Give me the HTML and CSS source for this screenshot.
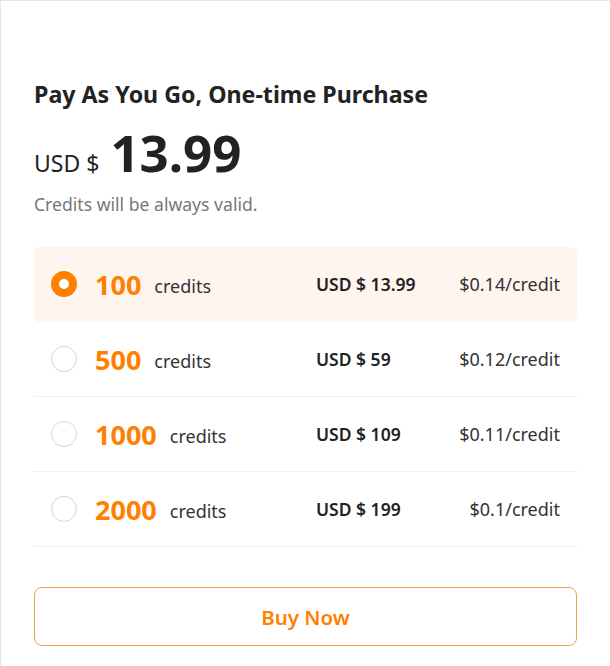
FILE: index.html
```html
<!DOCTYPE html>
<html>
<head>
<meta charset="utf-8">
<link rel="stylesheet" href="styles.css">
</head>
<body>
<div class="card">
  <h2 class="title">Pay As You Go, One-time Purchase</h2>
  <div class="price">
    <span class="cur">USD $</span>
    <span class="amount">13.99</span>
  </div>
  <p class="note">Credits will be always valid.</p>
  <div class="options">
    <div class="opt selected">
      <div class="left"><span class="radio"></span><span class="num">100</span><span class="unit">credits</span></div>
      <div class="usd">USD $ 13.99</div>
      <div class="per">$0.14/credit</div>
    </div>
    <div class="opt">
      <div class="left"><span class="radio"></span><span class="num">500</span><span class="unit">credits</span></div>
      <div class="usd">USD $ 59</div>
      <div class="per">$0.12/credit</div>
    </div>
    <div class="opt">
      <div class="left"><span class="radio"></span><span class="num">1000</span><span class="unit">credits</span></div>
      <div class="usd">USD $ 109</div>
      <div class="per">$0.11/credit</div>
    </div>
    <div class="opt">
      <div class="left"><span class="radio"></span><span class="num">2000</span><span class="unit">credits</span></div>
      <div class="usd">USD $ 199</div>
      <div class="per">$0.1/credit</div>
    </div>
  </div>
  <button class="buy">Buy Now</button>
</div>
</body>
</html>
```
FILE: styles.css
```css
html, body {
  margin: 0;
  padding: 0;
  background: #fff;
}
body {
  font-family: "Noto Sans", "Open Sans", sans-serif;
  color: #222;
}
.card {
  border-top: 1px solid #e6e6e6;
  border-left: 1px solid #e6e6e6;
  padding: 77px 33px 20px 33px;
  min-height: 666px;
  box-sizing: border-box;
}
.title {
  margin: 0;
  font-size: 23.2px;
  font-weight: 700;
  line-height: 32px;
  color: #222;
}
.price {
  display: flex;
  align-items: baseline;
  gap: 11px;
  margin-top: 13px;
  height: 58px;
}
.cur {
  font-size: 23px;
  color: #222;
}
.amount {
  font-size: 51px;
  font-weight: 700;
  line-height: 58px;
  color: #222;
}
.note {
  margin: 11px 0 0 0;
  font-size: 17.6px;
  line-height: 24px;
  color: #777;
}
.options {
  margin-top: 31px;
}
.opt {
  display: grid;
  grid-template-columns: 265px 1fr auto;
  align-items: center;
  height: 74px;
  padding: 0 17px;
  border-bottom: 1px solid #efefef;
}
.opt.selected {
  background: #fff5ef;
  border-bottom-color: transparent;
  border-radius: 6px;
}
.left {
  display: flex;
  align-items: center;
}
.radio {
  width: 26px;
  height: 26px;
  box-sizing: border-box;
  border-radius: 50%;
  border: 1px solid #d6d6d6;
  background: #fff;
  flex: none;
}
.selected .radio {
  border: 8px solid #ff8000;
  background: #fff;
}
.num {
  margin-left: 18px;
  font-size: 27px;
  font-weight: 700;
  color: #ff8000;
}
.unit {
  margin-left: 13px;
  font-size: 18px;
  color: #333;
  padding-top: 4px;
}
.usd {
  font-size: 17.5px;
  font-weight: 600;
  color: #222;
}
.per {
  font-size: 18px;
  color: #333;
  text-align: right;
}
.buy {
  display: block;
  width: 100%;
  margin-top: 40px;
  height: 59px;
  border: 1px solid #f5a04a;
  border-radius: 8px;
  background: #fff;
  color: #ff8000;
  font-family: inherit;
  font-size: 20.5px;
  font-weight: 600;
  cursor: pointer;
}
```
